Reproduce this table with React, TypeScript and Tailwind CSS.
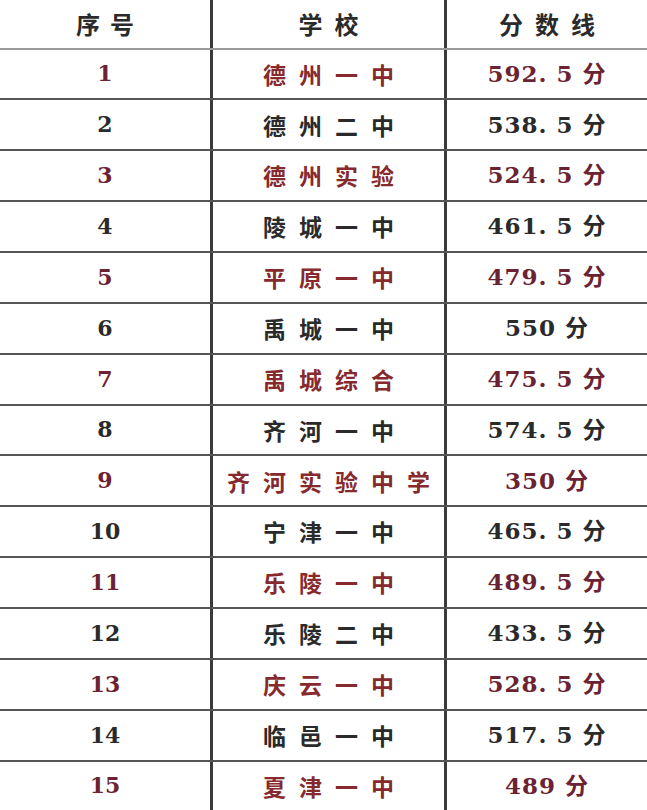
import React from "react";

type Row = { n: string; school: string; score: string; red: boolean };

const rows: Row[] = [
  { n: "1", school: "德州一中", score: "592. 5 分", red: true },
  { n: "2", school: "德州二中", score: "538. 5 分", red: false },
  { n: "3", school: "德州实验", score: "524. 5 分", red: true },
  { n: "4", school: "陵城一中", score: "461. 5 分", red: false },
  { n: "5", school: "平原一中", score: "479. 5 分", red: true },
  { n: "6", school: "禹城一中", score: "550 分", red: false },
  { n: "7", school: "禹城综合", score: "475. 5 分", red: true },
  { n: "8", school: "齐河一中", score: "574. 5 分", red: false },
  { n: "9", school: "齐河实验中学", score: "350 分", red: true },
  { n: "10", school: "宁津一中", score: "465. 5 分", red: false },
  { n: "11", school: "乐陵一中", score: "489. 5 分", red: true },
  { n: "12", school: "乐陵二中", score: "433. 5 分", red: false },
  { n: "13", school: "庆云一中", score: "528. 5 分", red: true },
  { n: "14", school: "临邑一中", score: "517. 5 分", red: false },
  { n: "15", school: "夏津一中", score: "489 分", red: true },
];

export default function App() {
  return (
    <div className="w-[647px] h-[810px] overflow-hidden bg-white">
      <div className="grid grid-cols-[213px_234px_1fr] h-[49.5px] border-b-2 border-[#9a9a9a] box-border font-['Noto_Sans_CJK_SC','Noto_Sans',sans-serif] text-[24px] font-bold text-[#2a2a2a]">
        <div className="flex items-center justify-center border-r-[3px] border-[#3a3a3a] tracking-[10px] pl-[10px]">
          序号
        </div>
        <div className="flex items-center justify-center border-r-[3px] border-[#3a3a3a] tracking-[12px] pl-[12px]">
          学校
        </div>
        <div className="flex items-center justify-center tracking-[12px] pl-[12px]">
          分数线
        </div>
      </div>
      {rows.map((r) => (
        <div
          key={r.n}
          className="grid grid-cols-[213px_234px_1fr] h-[50.86px] border-b-2 border-[#555555] box-border"
        >
          <div
            className={`flex items-center justify-center border-r-[3px] border-[#3a3a3a] text-[22px] font-bold font-['DejaVu_Serif','Noto_Sans_CJK_SC',serif] ${r.red ? "text-[#6b2232]" : "text-[#2a2a2a]"}`}
          >
            {r.n}
          </div>
          <div
            className={`flex items-center justify-center border-r-[3px] border-[#3a3a3a] text-[23px] font-bold tracking-[13px] pl-[13px] font-['Noto_Sans_CJK_SC','Noto_Sans',sans-serif] ${r.red ? "text-[#862a2e]" : "text-[#2a2a2a]"}`}
          >
            {r.school}
          </div>
          <div
            className={`flex items-center justify-center text-[23px] font-bold tracking-[1px] font-['DejaVu_Serif','Noto_Sans_CJK_SC',serif] ${r.red ? "text-[#6b2232]" : "text-[#2a2a2a]"}`}
          >
            {r.score}
          </div>
        </div>
      ))}
    </div>
  );
}
